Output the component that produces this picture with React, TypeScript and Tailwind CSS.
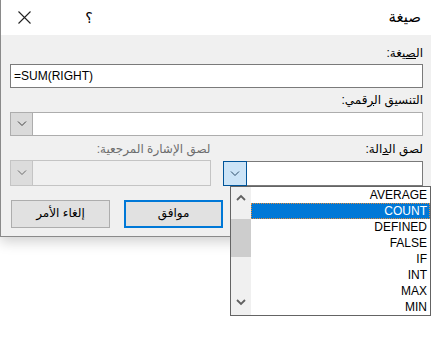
import React from "react";

const Chevron = ({ up = false, color = "#404040" }: { up?: boolean; color?: string }) => (
  <svg width="10" height="6" viewBox="0 0 10 6" className="block">
    <path
      d={up ? "M1 5.5 L5 1.5 L9 5.5" : "M1 0.5 L5 4.5 L9 0.5"}
      fill="none"
      stroke={color}
      strokeWidth="1"
    />
  </svg>
);

const ScrollChevron = ({ up = false }: { up?: boolean }) => (
  <svg width="10" height="7" viewBox="0 0 10 7" className="block">
    <path
      d={up ? "M1 6 L5 2 L9 6" : "M1 1 L5 5 L9 1"}
      fill="none"
      stroke="#606060"
      strokeWidth="1.8"
    />
  </svg>
);

const items = ["AVERAGE", "COUNT", "DEFINED", "FALSE", "IF", "INT", "MAX", "MIN"];

export default function App() {
  return (
    <div
      className="relative w-[431px] h-[348px] bg-white overflow-hidden text-[12px] text-black"
      style={{ fontFamily: '"Liberation Sans", "DejaVu Sans", sans-serif' }}
    >
      <div
        dir="rtl"
        className="w-[431px] border-l border-b border-[#8a8a8a] shadow-[0_5px_12px_rgba(0,0,0,0.18)]"
      >
        {/* Title bar */}
        <div className="h-[35px] bg-white flex items-center">
          <div className="pr-[10px] text-[15px] leading-none pb-[2px]">صيغة</div>
          <div className="flex-1" />
          <div className="w-[20px] text-center text-[14px] leading-none ml-[32px]">؟</div>
          <div className="w-[46px] flex justify-center">
            <svg width="13" height="13" viewBox="0 0 13 13">
              <path d="M0.5 0.5 L12.5 12.5 M12.5 0.5 L0.5 12.5" stroke="#222" strokeWidth="1.1" />
            </svg>
          </div>
        </div>
        {/* Body */}
        <div className="bg-[#f0f0f0] pr-[8px] pl-[9px] pt-[9px] pb-[8px]">
          <div className="h-[20px] leading-[18px]">
            ال<span className="underline">ص</span>يغة:
          </div>
          <div className="h-[24px] bg-white border border-[#7a7a7a] flex items-center justify-end pl-[3px]">
            <span dir="ltr" className="leading-none">=SUM(RIGHT)</span>
          </div>
          <div className="h-[24px] leading-[24px]">
            التنسيق ال<span className="underline">ر</span>قمي:
          </div>
          <div className="h-[24px] bg-white border border-[#adadad] flex justify-end">
            <div className="w-[22px] h-full bg-[#dadada] border-r border-[#adadad] flex items-center justify-center">
              <Chevron />
            </div>
          </div>
          <div className="flex mt-[4px] gap-[12px]">
            <div className="w-[201px] flex flex-col">
              <div className="h-[21px] leading-[18px]">
                لصق ال<span className="underline">د</span>الة:
              </div>
              <div className="h-[25px] bg-white border border-[#7a7a7a] flex justify-end">
                <div className="w-[22px] h-full bg-[#cce4f7] border border-[#005499] -my-px -ml-px flex items-center justify-center box-content">
                  <Chevron color="#2b4a66" />
                </div>
              </div>
            </div>
            <div className="w-[201px] flex flex-col">
              <div className="h-[20px] leading-[18px] text-[#6d6d6d]">لصق الإشارة المرجعية:</div>
              <div className="h-[26px] bg-[#f0f0f0] border border-[#c4c4c4] flex justify-end">
                <div className="w-[22px] h-full bg-[#dcdcdc] border-r border-[#c4c4c4] flex items-center justify-center">
                  <Chevron color="#6a6a6a" />
                </div>
              </div>
            </div>
          </div>
          <div className="flex justify-end gap-[14px] mt-[14px] pl-[1px]">
            <button className="w-[99px] h-[28px] bg-[#e1e1e1] border-2 border-[#0078d7] text-[12px] leading-none pb-[2px]">
              موافق
            </button>
            <button className="w-[99px] h-[28px] bg-[#e1e1e1] border border-[#adadad] text-[12px] leading-none pb-[2px]">
              إلغاء الأمر
            </button>
          </div>
        </div>
      </div>

      {/* Dropdown list */}
      <div className="absolute left-[230px] top-[186px] w-[201px] h-[130px] bg-white border border-[#646464] flex">
        <div className="w-[20px] bg-[#f0f0f0] flex flex-col items-center">
          <div className="h-[20px] flex items-center justify-center pt-[1px]">
            <ScrollChevron up />
          </div>
          <div className="h-[12px]" />
          <div className="w-[20px] h-[38px] bg-[#cdcdcd]" />
          <div className="flex-1" />
          <div className="h-[22px] flex items-center justify-center pb-[3px]">
            <ScrollChevron />
          </div>
        </div>
        <div className="flex-1 flex flex-col">
          {items.map((it) => (
            <div
              key={it}
              className={
                "h-[16px] leading-[16px] text-right pr-[3px] text-[12px] " +
                (it === "COUNT"
                  ? "bg-[#0078d7] text-white outline-1 outline-dotted outline-[#e08a3c] -outline-offset-1"
                  : "")
              }
            >
              {it}
            </div>
          ))}
        </div>
      </div>
    </div>
  );
}
